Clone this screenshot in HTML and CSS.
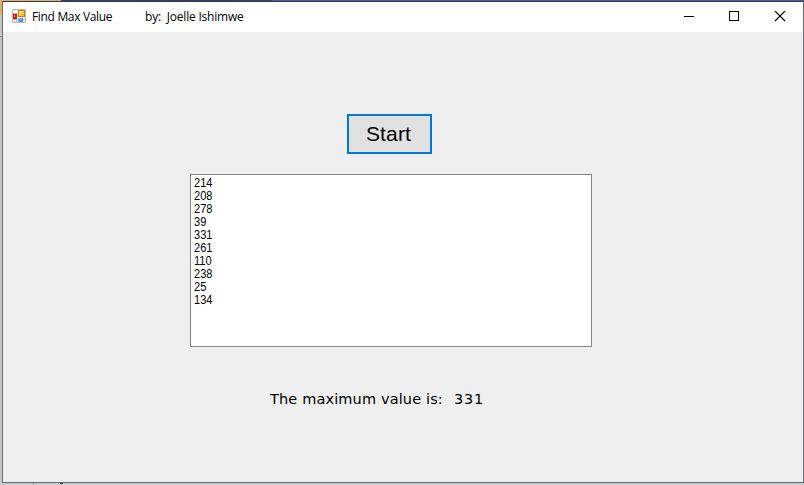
FILE: index.html
```
<!DOCTYPE html>
<html lang="en">
<head>
<meta charset="utf-8">
<title>Find Max Value</title>
<link rel="stylesheet" href="styles.css">
</head>
<body>
<main class="window">
  <header class="titlebar">
    <svg class="app-icon" width="14" height="14" viewBox="0 0 14 14">
      <defs>
        <linearGradient id="gold" x2="1" y2="1"><stop stop-color="#fff0a0"/><stop offset="1" stop-color="#e8ae08"/></linearGradient>
        <linearGradient id="blue" x2="1" y2="1"><stop stop-color="#8fbcff"/><stop offset="1" stop-color="#3a78e6"/></linearGradient>
      </defs>
      <path d="M.5.5h13v13H.5zM.5 4.500h6M4.500 9v4.500M.5 10.500h13" fill="#f4f4f4" stroke="#b8b8b8"/>
      <rect x="1" y="5" width="4" height="5" fill="#c4201c"/><rect x="2" y="6" width="1" height="2" fill="#ef8a7c"/>
      <rect x="6.500" y="1.500" width="6" height="6" fill="url(#gold)" stroke="#bf8700"/>
      <rect x="6" y="9" width="5" height="4" fill="url(#blue)"/>
    </svg>
    <h1 class="caption"><span class="name">Find Max Value</span><span class="author">by:&nbsp; Joelle Ishimwe</span></h1>
    <svg class="controls" width="106" height="12" viewBox="0 0 106 12" shape-rendering="crispEdges">
      <path d="M0 5.500h10M45.500 .5h9v9h-9z" fill="none" stroke="#000"/>
      <path d="M91 0l10 10M101 0l-10 10" fill="none" stroke="#000" stroke-width="1.100" shape-rendering="auto"/>
    </svg>
  </header>
  <section class="client">
    <button class="start"><span>Start</span></button>
    <ul class="list">
      <li>214</li><li>208</li><li>278</li><li>39</li><li>331</li><li>261</li><li>110</li><li>238</li><li>25</li><li>134</li>
    </ul>
    <p class="result"><span class="label">The maximum value is:</span><span class="value">331</span></p>
  </section>
</main>
</body>
</html>
```
FILE: styles.css
```
* { box-sizing: border-box; margin: 0; padding: 0; }
html, body { width: 804px; height: 485px; overflow: hidden; }
body {
  padding: 1px 0 2px 2px;
  background:
    linear-gradient(#e0b066, #e0b066) 0 0 / 61px 15px no-repeat,
    linear-gradient(#34406e, #34406e) 61px 0 / 211px 2px no-repeat,
    linear-gradient(#4d5a94, #4d5a94) 272px 0 / 532px 2px no-repeat,
    linear-gradient(#8899bf, #8899bf) 0 36px / 2px 1px no-repeat,
    linear-gradient(#9a9a9a, #9a9a9a) 33px 483px / 1px 2px no-repeat,
    linear-gradient(#2a3a5c, #2a3a5c) 60px 483px / 3px 1px no-repeat,
    #c6c7c9;
}
.window {
  display: flex; flex-direction: column;
  width: 802px; height: 482px;
  border: 1px solid #6b6b6d; border-top-color: #343957;
  background: #efefef;
}
.titlebar { display: flex; flex: 0 0 30px; padding: 7px 13px 0 9px; background: #fff; }
.app-icon { flex: none; }
.caption { display: flex; margin-left: 6px; font: 12px/16px "Open Sans", sans-serif; color: #000; white-space: nowrap; }
.name { width: 113px; letter-spacing: -.33px; }
.author { letter-spacing: -.2px; }
.controls { margin: 2px 0 0 auto; }
.client { display: flex; flex: 1; flex-direction: column; padding: 82px 0 0 187px; }
.start {
  width: 85px; height: 40px; margin-left: 157px; padding-right: 2px;
  border: 2px solid #0078d7; background: #e1e1e1; color: #000;
  font: 21px/34px "Liberation Sans", sans-serif; letter-spacing: .15px;
}
.list {
  width: 402px; height: 173px; margin-top: 20px; padding: 2px 3px;
  border: 1px solid #828790; background: #fff; list-style: none;
  font: 12px/13px "Liberation Sans", sans-serif; color: #000;
}
.list li { transform: scaleX(.92); transform-origin: 0 0; }
.result { display: flex; margin: 42px 0 0 80px; font: 14.5px/20px "DejaVu Sans", sans-serif; color: #000; white-space: nowrap; }
.label { width: 184px; letter-spacing: .14px; }
.value { letter-spacing: .8px; }
```
